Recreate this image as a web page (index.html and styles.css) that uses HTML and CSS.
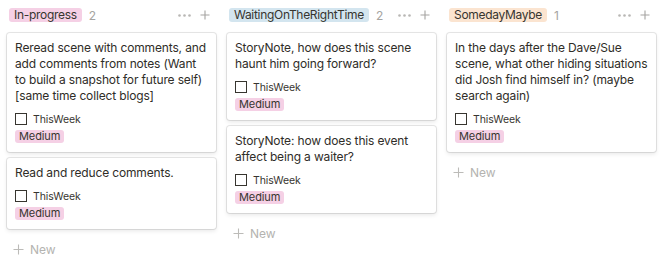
FILE: index.html
```html
<!DOCTYPE html>
<html lang="en">
<head>
    <meta charset="UTF-8">
    <title>Board</title>
    <link rel="stylesheet" href="styles.css">
</head>
<body>
    <div class="board">
        <div class="column">
            <div class="column-header">
                <span class="tag pink">In-progress</span>
                <span class="count">2</span>
                <span class="actions">
                    <svg class="dots" width="13" height="3" viewBox="0 0 13 3"><circle cx="1.5" cy="1.5" r="1.3"/><circle cx="6.5" cy="1.5" r="1.3"/><circle cx="11.5" cy="1.5" r="1.3"/></svg>
                    <svg class="plus" width="10" height="10" viewBox="0 0 10 10"><path d="M5 0.5v9M0.5 5h9"/></svg>
                </span>
            </div>
            <div class="card">
                <div class="title">Reread scene with comments, and add comments from notes (Want to build a snapshot for future self) [same time collect blogs]</div>
                <div class="check"><span class="box"></span>ThisWeek</div>
                <span class="tag small pink">Medium</span>
            </div>
            <div class="card">
                <div class="title">Read and reduce comments.</div>
                <div class="check"><span class="box"></span>ThisWeek</div>
                <span class="tag small pink">Medium</span>
            </div>
            <div class="new">
                <svg class="plus" width="11" height="11" viewBox="0 0 11 11"><path d="M5.5 0.5v10M0.5 5.5h10"/></svg>
                New
            </div>
        </div>

        <div class="column">
            <div class="column-header">
                <span class="tag blue">WaitingOnTheRightTime</span>
                <span class="count">2</span>
                <span class="actions">
                    <svg class="dots" width="13" height="3" viewBox="0 0 13 3"><circle cx="1.5" cy="1.5" r="1.3"/><circle cx="6.5" cy="1.5" r="1.3"/><circle cx="11.5" cy="1.5" r="1.3"/></svg>
                    <svg class="plus" width="10" height="10" viewBox="0 0 10 10"><path d="M5 0.5v9M0.5 5h9"/></svg>
                </span>
            </div>
            <div class="card">
                <div class="title">StoryNote, how does this scene haunt him going forward?</div>
                <div class="check"><span class="box"></span>ThisWeek</div>
                <span class="tag small pink">Medium</span>
            </div>
            <div class="card">
                <div class="title">StoryNote: how does this event affect being a waiter?</div>
                <div class="check"><span class="box"></span>ThisWeek</div>
                <span class="tag small pink">Medium</span>
            </div>
            <div class="new">
                <svg class="plus" width="11" height="11" viewBox="0 0 11 11"><path d="M5.5 0.5v10M0.5 5.5h10"/></svg>
                New
            </div>
        </div>

        <div class="column">
            <div class="column-header">
                <span class="tag orange">SomedayMaybe</span>
                <span class="count">1</span>
                <span class="actions">
                    <svg class="dots" width="13" height="3" viewBox="0 0 13 3"><circle cx="1.5" cy="1.5" r="1.3"/><circle cx="6.5" cy="1.5" r="1.3"/><circle cx="11.5" cy="1.5" r="1.3"/></svg>
                    <svg class="plus" width="10" height="10" viewBox="0 0 10 10"><path d="M5 0.5v9M0.5 5h9"/></svg>
                </span>
            </div>
            <div class="card">
                <div class="title">In the days after the Dave/Sue scene, what other hiding situations did Josh find himself in? (maybe search again)</div>
                <div class="check"><span class="box"></span>ThisWeek</div>
                <span class="tag small pink">Medium</span>
            </div>
            <div class="new">
                <svg class="plus" width="11" height="11" viewBox="0 0 11 11"><path d="M5.5 0.5v10M0.5 5.5h10"/></svg>
                New
            </div>
        </div>
    </div>
</body>
</html>
```

FILE: styles.css
```css
body {
    margin: 0;
    background-color: #fff;
    font-family: Inter, "Noto Sans", sans-serif;
    color: #37352f;
}

.board {
    display: flex;
    gap: 11px;
    padding: 7px 7px 0 7px;
}

.column {
    width: 209px;
    flex-shrink: 0;
}

.column-header {
    display: flex;
    align-items: center;
    height: 16px;
    padding: 0 6px 0 2px;
    margin-bottom: 10px;
}

.tag {
    display: inline-block;
    font-size: 12px;
    line-height: 14px;
    padding: 0 5px;
    border-radius: 3px;
    color: #37352f;
    letter-spacing: -0.3px;
}

.pink {
    background-color: #f5d0e5;
}

.blue {
    background-color: #d3e5ef;
}

.orange {
    background-color: #fbe4d0;
}

.count {
    margin-left: 7px;
    font-size: 12px;
    color: #a5a4a1;
}

.actions {
    margin-left: auto;
    display: flex;
    align-items: center;
}

.dots {
    fill: #b8b7b4;
    margin-right: 9px;
}

.plus {
    stroke: #a5a4a1;
    stroke-width: 1.1;
    fill: none;
}

.card {
    display: flex;
    flex-direction: column;
    align-items: flex-start;
    background-color: #fff;
    border-radius: 3px;
    box-shadow: rgba(15, 15, 15, 0.1) 0 0 0 1px, rgba(15, 15, 15, 0.1) 0 2px 4px;
    padding: 7px 8px 9px 8px;
    margin-bottom: 6px;
}

.title {
    font-size: 12px;
    line-height: 16px;
    letter-spacing: -0.15px;
    color: #2f2d28;
}

.check {
    display: flex;
    align-items: center;
    font-size: 10.5px;
    letter-spacing: -0.1px;
    margin-top: 7px;
    height: 16px;
}

.box {
    box-sizing: border-box;
    width: 12px;
    height: 12px;
    border: 1.3px solid #37352f;
    margin-right: 6px;
}

.tag.small {
    font-size: 11px;
    line-height: 13px;
    padding: 0 4px;
    margin-top: 3px;
    letter-spacing: -0.1px;
}

.new {
    display: flex;
    align-items: center;
    height: 28px;
    font-size: 12px;
    color: #b4b3b0;
    padding: 0 6px;
}

.new .plus {
    stroke: #bcbbb8;
    margin-right: 6px;
}
```
